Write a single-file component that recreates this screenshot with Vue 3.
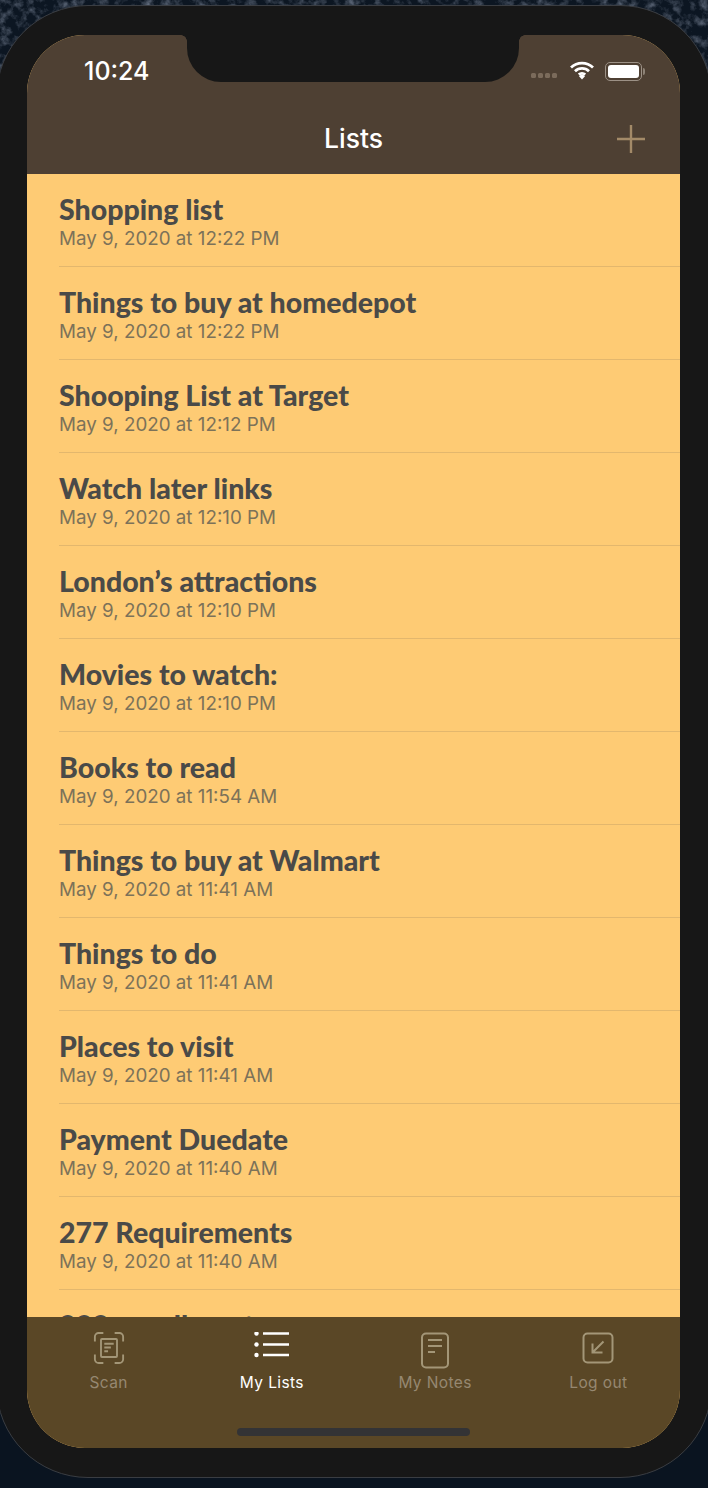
<script setup>
const rows = [
  ['Shopping list', 'May 9, 2020 at 12:22 PM'],
  ['Things to buy at homedepot', 'May 9, 2020 at 12:22 PM'],
  ['Shooping List at Target', 'May 9, 2020 at 12:12 PM'],
  ['Watch later links', 'May 9, 2020 at 12:10 PM'],
  ['London’s attractions', 'May 9, 2020 at 12:10 PM'],
  ['Movies to watch:', 'May 9, 2020 at 12:10 PM'],
  ['Books to read', 'May 9, 2020 at 11:54 AM'],
  ['Things to buy at Walmart', 'May 9, 2020 at 11:41 AM'],
  ['Things to do', 'May 9, 2020 at 11:41 AM'],
  ['Places to visit', 'May 9, 2020 at 11:41 AM'],
  ['Payment Duedate', 'May 9, 2020 at 11:40 AM'],
  ['277 Requirements', 'May 9, 2020 at 11:40 AM'],
  ['333 enrollment', 'May 9, 2020 at 11:40 AM'],
]
</script>

<template>
  <div class="page">
    <svg class="rock" width="708" height="1488" aria-hidden="true">
      <defs>
        <filter id="grain">
          <feTurbulence type="fractalNoise" baseFrequency="0.11" numOctaves="4" seed="7" />
          <feColorMatrix type="matrix" values="0 0 0 0 0.2  0 0 0 0 0.24  0 0 0 0 0.32  1.6 0 0 0 -0.72" />
        </filter>
        <linearGradient id="fade" x1="0" y1="0" x2="0" y2="1">
          <stop offset="0.05" stop-color="#0a1420" stop-opacity="0" />
          <stop offset="0.85" stop-color="#0a1420" stop-opacity="1" />
        </linearGradient>
      </defs>
      <rect width="708" height="1488" fill="#0c1622" />
      <rect width="708" height="1488" filter="url(#grain)" />
      <rect width="708" height="1488" fill="url(#fade)" />
    </svg>
    <div class="phone">
      <div class="screen">
        <header class="nav">
          <div class="status">
            <span class="time">10:24</span>
            <div class="notch"></div>
            <div class="indicators">
              <span class="dots"><i></i><i></i><i></i><i></i></span>
              <svg width="26" height="20" viewBox="0 0 26 20" class="wifi">
                <path d="M2 7.5a16 16 0 0 1 22 0" />
                <path d="M6 11.2a10.2 10.2 0 0 1 14 0" />
                <path d="M9.8 14.6a4.8 4.8 0 0 1 6.4 0" />
                <path class="wifi-tip" d="M13 19.6l-3-3.4a4.4 4.4 0 0 1 6 0z" />
              </svg>
              <span class="battery"><b></b></span>
              <span class="cap"></span>
            </div>
          </div>
          <div class="titlebar">
            <h1>Lists</h1>
            <svg class="plus" width="30" height="30" viewBox="0 0 30 30"><path d="M15 1v28M1 15h28" /></svg>
          </div>
        </header>
        <main class="list">
          <div v-for="r in rows" :key="r[0]" class="row">
            <div class="name">{{ r[0] }}</div>
            <div class="date">{{ r[1] }}</div>
          </div>
        </main>
        <nav class="tabs">
          <div class="tab">
            <svg width="32" height="32" viewBox="0 0 34 34">
              <path d="M2 10V5a4 4 0 0 1 4-4h5M23 1h5a4 4 0 0 1 4 4v5M32 24v5a4 4 0 0 1-4 4h-5M11 33H6a4 4 0 0 1-4-4v-5" />
              <rect x="8.5" y="7.5" width="17" height="19" rx="1" />
              <path d="M12 12.5h10M12 16.5h7M12 20.5h4" />
            </svg>
            <span>Scan</span>
          </div>
          <div class="tab active">
            <svg width="36" height="34" viewBox="0 0 36 34">
              <circle cx="2.5" cy="1.5" r="2.2" /><circle cx="2.5" cy="12.5" r="2.2" /><circle cx="2.5" cy="23" r="2.2" />
              <path d="M9 1.5h26M9 12.5h26M9 23h26" />
            </svg>
            <span>My Lists</span>
          </div>
          <div class="tab">
            <svg width="30" height="37" viewBox="0 0 30 37">
              <rect x="2" y="1.5" width="26" height="34" rx="4" />
              <path d="M8 8h14M8 14h14M8 20h7" />
            </svg>
            <span>My Notes</span>
          </div>
          <div class="tab">
            <svg width="32" height="32" viewBox="0 0 32 32">
              <rect x="1.5" y="1.5" width="29" height="29" rx="4" />
              <path d="M21.5 9.5L10.5 20.5M10.5 11.5v9h10" />
            </svg>
            <span>Log out</span>
          </div>
        </nav>
        <div class="home"></div>
      </div>
    </div>
  </div>
</template>

<style>
html, body { margin: 0; background: #0b1420; }
</style>

<style scoped>
.page {
  position: relative;
  width: 708px;
  height: 1488px;
  overflow: hidden;
  font-family: Inter, "Liberation Sans", sans-serif;
}
.rock { position: absolute; inset: 0; }
.phone {
  position: absolute;
  left: -4px;
  top: 5px;
  width: 716px;
  height: 1473px;
  box-sizing: border-box;
  padding: 29px 31px 29px 30px;
  background: #171717;
  border: 1px solid #3a3d42;
  border-radius: 92px;
}
.screen {
  position: relative;
  height: 100%;
  overflow: hidden;
  border-radius: 58px;
  background: #fecb74;
  display: flex;
  flex-direction: column;
}
.nav { height: 139px; flex: none; background: #4e4033; display: flex; flex-direction: column; }
.status { height: 71px; position: relative; }
.time {
  position: absolute;
  left: 57px;
  top: 19px;
  color: #fff;
  font-size: 25px;
  line-height: 34px;
  font-weight: 500;
}
.notch {
  position: absolute;
  left: 160px;
  top: 0;
  width: 332px;
  height: 47px;
  background: #171717;
  border-radius: 0 0 34px 34px;
}
.notch::before,
.notch::after {
  content: "";
  position: absolute;
  top: 0;
  width: 6px;
  height: 6px;
}
.notch::before { left: -6px; background: radial-gradient(circle at 0 100%, transparent 5.5px, #171717 6px); }
.notch::after { right: -6px; background: radial-gradient(circle at 100% 100%, transparent 5.5px, #171717 6px); }
.indicators { position: absolute; left: 504px; top: 22px; height: 28px; display: flex; align-items: center; }
.dots { display: flex; gap: 2px; margin-right: 12px; margin-top: 8px; }
.dots i { width: 5px; height: 5px; border-radius: 1.5px; background: #7b6b5b; }
.wifi { margin-right: 10px; margin-top: -2px; }
.wifi path { fill: none; stroke: #fff; stroke-width: 2.8; }
.wifi .wifi-tip { fill: #fff; stroke: none; }
.battery {
  box-sizing: border-box;
  width: 37px;
  height: 19px;
  border: 1px solid #9c9186;
  border-radius: 5px;
  padding: 2px;
  display: flex;
}
.battery b { flex: 1; background: #fff; border-radius: 3px; }
.cap { width: 2px; height: 7px; background: #8d8276; border-radius: 0 2px 2px 0; margin-left: 1px; }
.titlebar { flex: 1; position: relative; display: flex; align-items: center; justify-content: center; }
.titlebar h1 { margin: 0 0 5px; color: #fff; font-size: 26.5px; font-weight: 500; line-height: 32px; }
.plus { position: absolute; left: 589px; top: 18px; }
.plus path { fill: none; stroke: #a38a68; stroke-width: 2.4; }
.list { flex: 1; min-height: 0; overflow: hidden; }
.row {
  height: 93px;
  box-sizing: border-box;
  margin-left: 32px;
  border-bottom: 1px solid #e3b76d;
  padding-top: 19px;
}
.name {
  color: #4a4a48;
  font-family: Lato, "DejaVu Sans Condensed", sans-serif;
  font-weight: 900;
  font-size: 28.5px;
  line-height: 32px;
  white-space: nowrap;
}
.date {
  color: #7c7259;
  font-size: 18.8px;
  line-height: 22px;
  margin-top: 3px;
  white-space: nowrap;
}
.tabs {
  position: absolute;
  left: 0;
  right: 0;
  bottom: 0;
  height: 131px;
  background: #5a4726;
  display: grid;
  grid-template-columns: repeat(4, 1fr);
}
.tab {
  color: #968871;
  display: flex;
  flex-direction: column;
  align-items: center;
  height: 74px;
  padding-top: 15px;
  font-size: 15.5px;
  letter-spacing: 0.4px;
  position: relative;
}
.tab svg { fill: none; stroke: #a39677; stroke-width: 2; }
.tab span { position: absolute; top: 56px; line-height: 20px; white-space: nowrap; }
.tab.active { color: #fff; }
.tab.active svg { stroke: #fff; stroke-width: 2.4; }
.tab.active circle { fill: #fff; stroke: none; }
.home {
  position: absolute;
  left: 210px;
  bottom: 12px;
  width: 233px;
  height: 8px;
  border-radius: 4px;
  background: #333335;
}
</style>
